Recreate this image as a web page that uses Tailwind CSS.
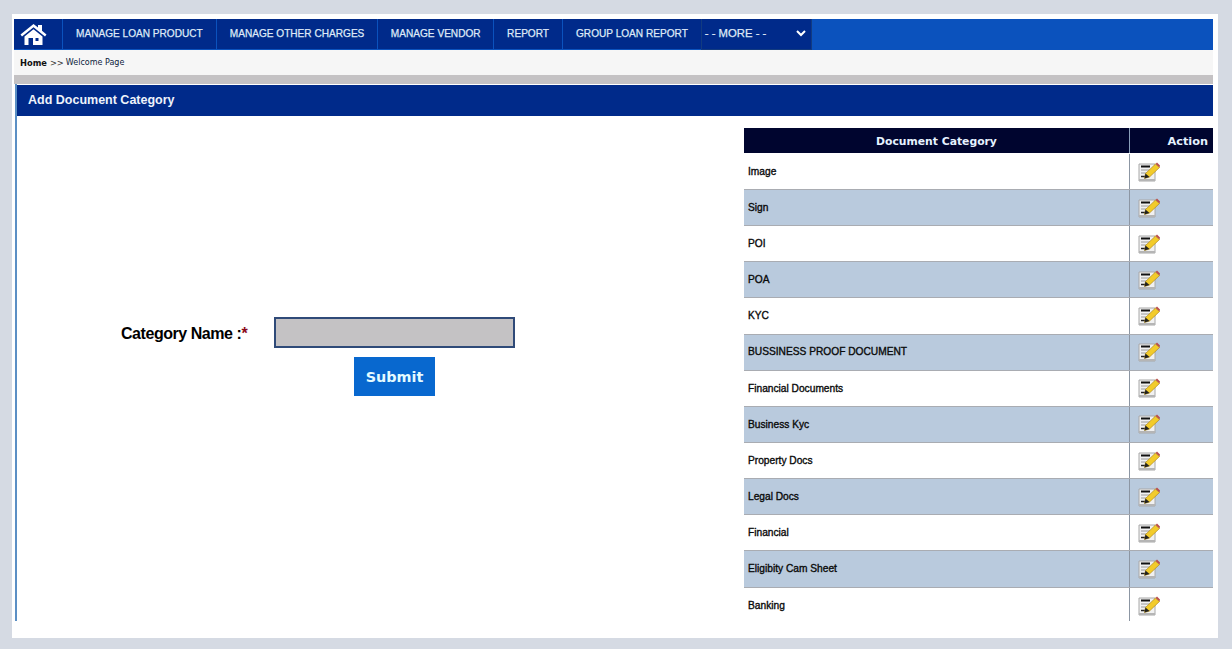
<!DOCTYPE html>
<html lang="en">
<head>
  <meta charset="UTF-8" />
  <title>Add Document Category</title>
  <script src="https://cdn.jsdelivr.net/npm/@tailwindcss/browser@4"></script>
</head>
<body class="bg-[#d5dae3] h-[649px] overflow-hidden font-['Liberation_Sans',Arial,sans-serif]">
  <svg class="hidden">
    <symbol id="edit" viewBox="0 0 22 20">
      <path d="M1 2h16v17H1z" fill="#f1f1f1" stroke="#a8a8a8" />
      <path d="M3 4.500h9" stroke="#111" stroke-width="2" />
      <path d="M3 8h11M3 11h7" stroke="#9a9a9a" />
      <path d="M3 14.500h5" stroke="#222" stroke-width="1.500" />
      <path d="M1 17h16v2H1z" fill="#b5b5b5" />
      <path d="M6.500 16.500l1-5L17.500 2l4 3.500L11.500 15z" fill="#f2cb2b" stroke="#a87f10" stroke-width=".6" />
      <path d="M17.500 2l1.500-1.500 3 3L21.500 5.500z" fill="#b9504d" />
      <path d="M6.500 16.500l1-5 4 3.500z" fill="#222" />
    </symbol>
  </svg>

  <div class="ml-3 mt-3.5 w-[1206px] h-[624px] bg-white pt-[5px] pl-0.5 pr-[5px]">
    <nav class="h-[31px] bg-[#0b52bd] flex items-stretch text-[10.100px] text-[#dfe9f7] [-webkit-text-stroke:0.25px_#dfe9f7]">
      <a class="w-[49px] bg-[#002a8a] border-r border-b border-[#0b52bd] flex items-center pl-[6px]">
        <svg class="w-[27px] h-[23px]" viewBox="0 0 27 23" fill="#fff">
          <path d="M13.500 1L0.500 11.500l1.500 2L13.500 4.200 25 13.500l1.500-2L22 7.800V2h-4v2.500z" />
          <path d="M4.500 13.500L13.500 6.200l9 7.300V22H13v-7H8.500v7h-4z" />
          <path d="M15.500 15h3v3h-3z" fill="#002a8a" />
        </svg>
      </a>
      <a class="px-[13px] bg-[#002a8a] border-r border-b border-[#0b52bd] flex items-center">MANAGE LOAN PRODUCT</a>
      <a class="px-[13px] bg-[#002a8a] border-r border-b border-[#0b52bd] flex items-center">MANAGE OTHER CHARGES</a>
      <a class="px-[12.500px] bg-[#002a8a] border-r border-b border-[#0b52bd] flex items-center">MANAGE VENDOR</a>
      <a class="px-[13px] bg-[#002a8a] border-r border-b border-[#0b52bd] flex items-center">REPORT</a>
      <a class="px-[13px] bg-[#002a8a] border-b border-[#0b52bd] flex items-center">GROUP LOAN REPORT</a>
      <div class="w-[111px] bg-[#002a8a] border-x border-b border-[#123b80] flex items-center justify-between pl-[3px] pr-[5px] pb-[2px] text-[11.300px]">
        <span>- - MORE - -</span>
        <svg class="w-[10px] h-[8px]" viewBox="0 0 10 8" fill="none" stroke="#fff" stroke-width="2"><path d="M1 2l4 4 4-4" /></svg>
      </div>
    </nav>

    <div class="h-[25px] pt-px bg-[#f6f6f6] flex items-center pl-[6px] text-[8.300px] text-[#111] font-['DejaVu_Sans',sans-serif]">
      <b>Home</b><span class="ml-[3px] text-[#333]">&gt;&gt;</span><span class="ml-[2px] text-[8px] text-[#0c1c3c]">Welcome Page</span>
    </div>

    <div class="h-[9px] bg-[#c4c2c4]"></div>

    <div class="h-[537px] ml-px border-l-2 border-[#5b8fc4] overflow-hidden">
      <h1 class="h-[32px] bg-[#002a8a] border-t border-white flex items-center pl-[11px] text-[12.500px] font-bold text-[#eef3fb]">Add Document Category</h1>

      <div class="flex">
        <form class="w-[727px] h-[505px]">
          <div class="flex items-center pt-[201px] pl-[104px]">
            <label class="w-[153px] pt-0.5 text-base tracking-[-0.45px] font-bold text-black">Category Name :<span class="text-[#8b0a1a]">*</span></label>
            <input class="w-[241px] h-[31px] bg-[#c4c2c4] border-2 border-[#2f4a78]" type="text" />
          </div>
          <div class="pl-[337px] pt-[9px]">
            <button class="w-[81px] h-[39px] pt-0.5 bg-[#0868cf] text-[#e4fbff] text-[14.400px] font-bold font-['DejaVu_Sans',sans-serif]" type="button">Submit</button>
          </div>
        </form>

        <div class="w-[469px] pt-3">
          <div class="h-[25px] bg-[#00052f] flex text-[10.800px] font-bold text-[#e6f2ff] font-['DejaVu_Sans',sans-serif]">
            <div class="w-[386px] pt-[3px] border-r border-[#8aa0ba] flex items-center justify-center">Document Category</div>
            <div class="flex-1 pt-[3px] flex items-center justify-end pr-[5px] text-[11.300px]">Action</div>
          </div>
          <div class="text-[10.200px] text-[#0a0a0a] [-webkit-text-stroke:0.35px_#0a0a0a]">
            <div class="h-[37px] pt-px flex border-b border-[#a9acb2]"><div class="w-[386px] border-r border-[#8c96a3] flex items-center pl-1">Image</div><div class="flex items-center pl-2"><svg class="w-[22px] h-5"><use href="#edit" /></svg></div></div>
            <div class="h-[36.150px] flex border-b border-[#a9acb2] bg-[#b9cadd]"><div class="w-[386px] border-r border-[#8c96a3] flex items-center pl-1">Sign</div><div class="flex items-center pl-2"><svg class="w-[22px] h-5"><use href="#edit" /></svg></div></div>
            <div class="h-[36.150px] flex border-b border-[#a9acb2]"><div class="w-[386px] border-r border-[#8c96a3] flex items-center pl-1">POI</div><div class="flex items-center pl-2"><svg class="w-[22px] h-5"><use href="#edit" /></svg></div></div>
            <div class="h-[36.150px] flex border-b border-[#a9acb2] bg-[#b9cadd]"><div class="w-[386px] border-r border-[#8c96a3] flex items-center pl-1">POA</div><div class="flex items-center pl-2"><svg class="w-[22px] h-5"><use href="#edit" /></svg></div></div>
            <div class="h-[36.150px] flex border-b border-[#a9acb2]"><div class="w-[386px] border-r border-[#8c96a3] flex items-center pl-1">KYC</div><div class="flex items-center pl-2"><svg class="w-[22px] h-5"><use href="#edit" /></svg></div></div>
            <div class="h-[36.150px] flex border-b border-[#a9acb2] bg-[#b9cadd]"><div class="w-[386px] border-r border-[#8c96a3] flex items-center pl-1">BUSSINESS PROOF DOCUMENT</div><div class="flex items-center pl-2"><svg class="w-[22px] h-5"><use href="#edit" /></svg></div></div>
            <div class="h-[36.150px] flex border-b border-[#a9acb2]"><div class="w-[386px] border-r border-[#8c96a3] flex items-center pl-1">Financial Documents</div><div class="flex items-center pl-2"><svg class="w-[22px] h-5"><use href="#edit" /></svg></div></div>
            <div class="h-[36.150px] flex border-b border-[#a9acb2] bg-[#b9cadd]"><div class="w-[386px] border-r border-[#8c96a3] flex items-center pl-1">Business Kyc</div><div class="flex items-center pl-2"><svg class="w-[22px] h-5"><use href="#edit" /></svg></div></div>
            <div class="h-[36.150px] flex border-b border-[#a9acb2]"><div class="w-[386px] border-r border-[#8c96a3] flex items-center pl-1">Property Docs</div><div class="flex items-center pl-2"><svg class="w-[22px] h-5"><use href="#edit" /></svg></div></div>
            <div class="h-[36.150px] flex border-b border-[#a9acb2] bg-[#b9cadd]"><div class="w-[386px] border-r border-[#8c96a3] flex items-center pl-1">Legal Docs</div><div class="flex items-center pl-2"><svg class="w-[22px] h-5"><use href="#edit" /></svg></div></div>
            <div class="h-[36.150px] flex border-b border-[#a9acb2]"><div class="w-[386px] border-r border-[#8c96a3] flex items-center pl-1">Financial</div><div class="flex items-center pl-2"><svg class="w-[22px] h-5"><use href="#edit" /></svg></div></div>
            <div class="h-[36.150px] flex border-b border-[#a9acb2] bg-[#b9cadd]"><div class="w-[386px] border-r border-[#8c96a3] flex items-center pl-1">Eligibity Cam Sheet</div><div class="flex items-center pl-2"><svg class="w-[22px] h-5"><use href="#edit" /></svg></div></div>
            <div class="h-[36.150px] flex"><div class="w-[386px] border-r border-[#8c96a3] flex items-center pl-1">Banking</div><div class="flex items-center pl-2"><svg class="w-[22px] h-5"><use href="#edit" /></svg></div></div>
          </div>
        </div>
      </div>
    </div>
  </div>
</body>
</html>
